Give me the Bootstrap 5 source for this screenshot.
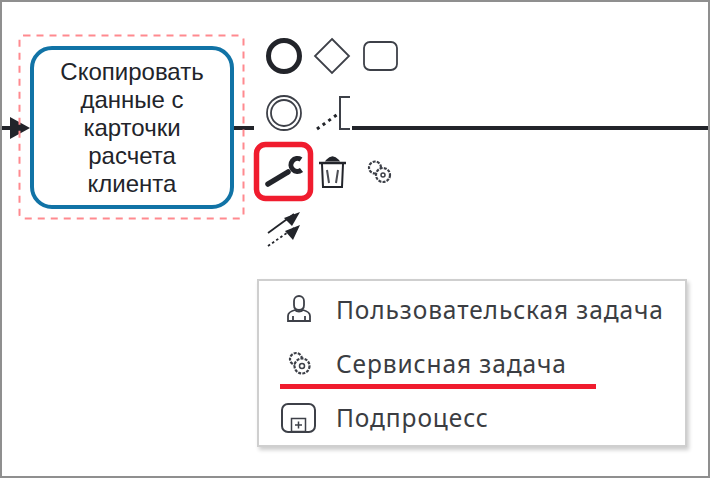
<!DOCTYPE html>
<html lang="en">
<head>
    <meta charset="UTF-8">
    <meta name="viewport" content="width=device-width, initial-scale=1.0">
    <link rel="stylesheet" href="https://cdn.jsdelivr.net/npm/bootstrap@5.3.0/dist/css/bootstrap.min.css">
    <title>Сервисная задача</title>
    <style>
        body { background: #fff; overflow: hidden; }
        .canvas-frame { position: relative; width: 710px; height: 478px; border: 2px solid #8f8f8f; background: #fff; overflow: hidden; }
        .diagram { position: absolute; left: -2px; top: -2px; z-index: 1; }
        .task-node { position: absolute; left: 28px; top: 44px; width: 204px; height: 163px; border: 4px solid #1173a6; border-radius: 22px; background: #fff; font-family: "Liberation Sans", Arial, sans-serif; font-size: 24px; line-height: 28px; color: #22242a; text-align: center; }
        .type-menu { position: absolute; left: 255px; top: 277px; width: 430px; height: 168px; border: 2px solid #cfcfcf; box-shadow: 2px 3px 4px rgba(0,0,0,.2); background: #fff; border-radius: 0; padding: 2px 0 0; z-index: 2; }
        .type-item { height: 54.5px; border: 0; padding: 0 0 0 22px; gap: 19px; font-family: "Noto Sans", sans-serif; font-size: 24.5px; letter-spacing: .9px; color: #3b3d42; background: transparent; }
        .type-icon { width: 36px; flex: none; display: block; }
        .red-mark { position: absolute; left: 278px; top: 382px; width: 316px; height: 5px; background: #f01c2e; z-index: 3; }
    </style>
</head>
<body class="m-0">
    <div class="canvas-frame">
        <div class="task-node d-flex align-items-center justify-content-center">
            <div>Скопировать<br>данные с<br>карточки<br>расчета<br>клиента</div>
        </div>

        <svg class="diagram" width="710" height="478" fill="none" stroke="#22242a">
            <!-- flows -->
            <path d="M1 128H14" stroke-width="4"/>
            <path d="M10 117L30 128L10 139Z" fill="#22242a" stroke="none"/>
            <path d="M234 128H254M352 128H710" stroke-width="4"/>
            <!-- selection outline -->
            <rect x="19.500" y="35.500" width="224" height="183" rx="4" stroke="#ff8a8f" stroke-width="2" stroke-dasharray="7 6"/>
            <!-- context pad, first row -->
            <circle cx="284" cy="56" r="15.500" stroke-width="5"/>
            <path d="M332 39L349 56L332 73L315 56Z" stroke-width="1.800" stroke="#3d4048"/>
            <rect x="364" y="42" width="33" height="28" rx="6" stroke-width="1.800" stroke="#3d4048"/>
            <!-- second row -->
            <circle cx="284" cy="113" r="17" stroke-width="1.800" stroke="#3d4048"/>
            <circle cx="284" cy="113" r="13" stroke-width="1.800" stroke="#3d4048"/>
            <path d="M317 129L338 114" stroke-width="3" stroke-dasharray="3 4"/>
            <path d="M350 97H340V129H350" stroke-width="2" stroke="#3d4048"/>
            <!-- wrench with red marker -->
            <rect x="256.500" y="144.500" width="54" height="54" rx="9" stroke="#f01c2e" stroke-width="5.500"/>
            <path d="M268 184L288 172" stroke-width="5.500" stroke-linecap="round"/>
            <path d="M301 159.500A6.500 6.500 0 1 0 301.500 170" stroke-width="5"/>
            <!-- trash -->
            <path d="M319 163H346" stroke-width="2.500"/>
            <path d="M327 160.500Q332.500 154 338 160.500Z" fill="#22242a" stroke-width="2"/>
            <path d="M322 164L323 187H342L343 164" stroke-width="2"/>
            <path d="M327 170L329 183M338 170L336 183" stroke-width="2" stroke="#4c4e54"/>
            <!-- gears -->
            <g stroke="#3d4048" stroke-width="2.200">
                <circle cx="375" cy="167.500" r="6" stroke-dasharray="3 1.200"/>
                <circle cx="383" cy="175" r="7" stroke-dasharray="3 1.200" fill="#fff"/>
                <circle cx="383" cy="175" r="2" stroke-width="1.500"/>
            </g>
            <!-- connect arrows -->
            <path d="M268 233L294 214" stroke-width="1.800"/>
            <path d="M300 212L284 218L292 226Z" fill="#22242a" stroke="none"/>
            <path d="M268 246L294 228" stroke-width="1.800" stroke-dasharray="2.500 2.500"/>
            <path d="M300 225L285 231L293 240Z" fill="#22242a" stroke="none"/>
        </svg>

        <div class="list-group type-menu">
            <div class="list-group-item d-flex align-items-center type-item">
                <svg class="type-icon" width="36" height="30" fill="none" stroke="#3d4048" stroke-width="1.800">
                    <path d="M13 6A5 5 0 0 1 23 6V10C23 13 21 15 18 15S13 13 13 10Z"/>
                    <path d="M7 26V21C7 18 10 16 14 15C16 17 20 17 22 15C26 16 29 18 29 21V26Z"/>
                    <path d="M12 21V26M24 21V26"/>
                </svg>
                <span>Пользовательская задача</span>
            </div>
            <div class="list-group-item d-flex align-items-center type-item">
                <svg class="type-icon" width="36" height="30" fill="none" stroke="#3d4048" stroke-width="2.200">
                    <circle cx="15" cy="10" r="6" stroke-dasharray="3 1.200"/>
                    <circle cx="21" cy="17" r="7.500" stroke-dasharray="3 1.200" fill="#fff"/>
                    <circle cx="21" cy="17" r="2.500" stroke-width="1.500"/>
                </svg>
                <span>Сервисная задача</span>
            </div>
            <div class="list-group-item d-flex align-items-center type-item">
                <svg class="type-icon" width="36" height="30" fill="none" stroke="#3d4048" stroke-width="2">
                    <rect x="1" y="1" width="33" height="28" rx="6"/>
                    <rect x="10.500" y="15.500" width="14" height="13" stroke-width="1.500"/>
                    <path d="M14 22H21M17.500 18.500V25.500" stroke-width="1.500"/>
                </svg>
                <span>Подпроцесс</span>
            </div>
        </div>

        <div class="red-mark"></div>
    </div>
    <script src="https://cdn.jsdelivr.net/npm/bootstrap@5.3.0/dist/js/bootstrap.bundle.min.js"></script>
</body>
</html>
